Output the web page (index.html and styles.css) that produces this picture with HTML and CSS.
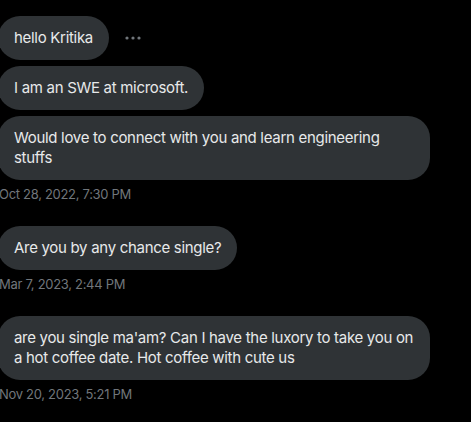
FILE: index.html
```html
<!DOCTYPE html>
<html>
<head>
<meta charset="utf-8">
<link rel="stylesheet" href="styles.css">
</head>
<body>
<div class="thread">
  <div class="group">
    <div class="row">
      <div class="bubble">hello Kritika</div>
      <span class="more" aria-label="More">
        <svg width="18" height="6" viewBox="0 0 18 6"><circle cx="3" cy="3" r="1.6"/><circle cx="9" cy="3" r="1.6"/><circle cx="15" cy="3" r="1.6"/></svg>
      </span>
    </div>
    <div class="row"><div class="bubble">I am an SWE at microsoft.</div></div>
    <div class="row"><div class="bubble">Would love to connect with you and learn engineering stuffs</div></div>
    <div class="time">Oct 28, 2022, 7:30 PM</div>
  </div>
  <div class="group">
    <div class="row"><div class="bubble">Are you by any chance single?</div></div>
    <div class="time">Mar 7, 2023, 2:44 PM</div>
  </div>
  <div class="group">
    <div class="row"><div class="bubble">are you single ma'am? Can I have the luxory to take you on a hot coffee date. Hot coffee with cute us</div></div>
    <div class="time">Nov 20, 2023, 5:21 PM</div>
  </div>
</div>
</body>
</html>
```
FILE: styles.css
```css
html, body {
  margin: 0;
  padding: 0;
  background: #000;
}
body {
  font-family: Inter, "Noto Sans", sans-serif;
  color: #e7e9ea;
}
.thread {
  display: flex;
  flex-direction: column;
  gap: 24px;
  padding-top: 16px;
  margin-left: -2px;
  width: 432px;
}
.group {
  display: flex;
  flex-direction: column;
  gap: 6px;
}
.row {
  display: flex;
  align-items: center;
}
.bubble {
  background: #2f3336;
  border-radius: 22px;
  padding: 12px 16px;
  font-size: 15px;
  line-height: 20px;
  letter-spacing: -0.3px;
  max-width: 100%;
  box-sizing: border-box;
}
.more {
  display: flex;
  margin-left: 15px;
  fill: #71767b;
}
.time {
  margin-top: 0;
  font-size: 13px;
  line-height: 16px;
  letter-spacing: -0.3px;
  color: #71767b;
  padding-left: 1px;
}
```
